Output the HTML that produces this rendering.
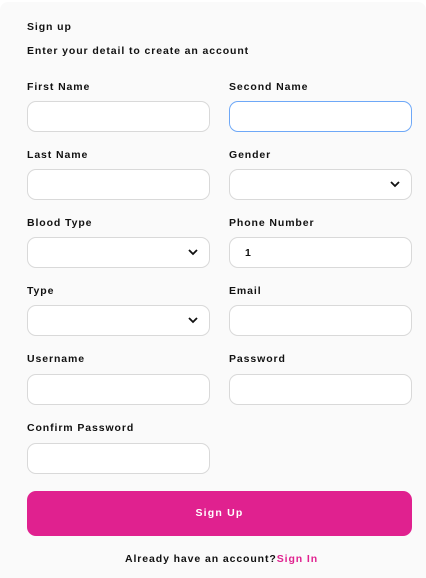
<!DOCTYPE html>
<html><head><style>
*{box-sizing:border-box;margin:0;padding:0}
body{width:426px;height:578px;background:#fff;font-family:"Liberation Sans",sans-serif;font-weight:bold;color:#111;position:relative;overflow:hidden}
.panel{position:absolute;left:0;top:2px;width:426px;height:576px;background:#fafafa;border-radius:8px 8px 0 0}
.t{position:absolute;font-size:10.5px;letter-spacing:0.9px;line-height:12px}
.in{position:absolute;width:183px;height:31px;background:#fff;border:1px solid #d9d9d9;border-radius:9px}
.in.f{border-color:#6ea8f7}
.chev{position:absolute;right:11px;top:10px}
.btn{position:absolute;left:27px;top:491px;width:385px;height:45px;background:#e0218f;border-radius:9px;color:#fff;text-align:center;line-height:45px;font-size:10.5px;letter-spacing:1.2px}
</style></head><body>
<div class="panel"></div>
<div class="t" style="left:27px;top:21px">Sign up</div>
<div class="t" style="left:27px;top:45px">Enter your detail to create an account</div>

<div class="t" style="left:27px;top:81px">First Name</div>
<div class="t" style="left:229px;top:81px">Second Name</div>
<div class="in" style="left:27px;top:101px"></div>
<div class="in f" style="left:229px;top:101px"></div>

<div class="t" style="left:27px;top:149px">Last Name</div>
<div class="t" style="left:229px;top:149px">Gender</div>
<div class="in" style="left:27px;top:169px"></div>
<div class="in" style="left:229px;top:169px"><svg class="chev" width="10" height="8" viewBox="0 0 10 8"><path d="M1 2l4 4 4-4" fill="none" stroke="#111" stroke-width="1.8"/></svg></div>

<div class="t" style="left:27px;top:217px">Blood Type</div>
<div class="t" style="left:229px;top:217px">Phone Number</div>
<div class="in" style="left:27px;top:237px"><svg class="chev" width="10" height="8" viewBox="0 0 10 8"><path d="M1 2l4 4 4-4" fill="none" stroke="#111" stroke-width="1.8"/></svg></div>
<div class="in" style="left:229px;top:237px"><span class="t" style="left:15px;top:9px">1</span></div>

<div class="t" style="left:27px;top:285px">Type</div>
<div class="t" style="left:229px;top:285px">Email</div>
<div class="in" style="left:27px;top:305px"><svg class="chev" width="10" height="8" viewBox="0 0 10 8"><path d="M1 2l4 4 4-4" fill="none" stroke="#111" stroke-width="1.8"/></svg></div>
<div class="in" style="left:229px;top:305px"></div>

<div class="t" style="left:27px;top:353px">Username</div>
<div class="t" style="left:229px;top:353px">Password</div>
<div class="in" style="left:27px;top:374px"></div>
<div class="in" style="left:229px;top:374px"></div>

<div class="t" style="left:27px;top:422px">Confirm Password</div>
<div class="in" style="left:27px;top:443px"></div>

<div class="btn">Sign Up</div>
<div class="t" style="left:0;width:443px;text-align:center;top:553px">Already have an account?<span style="color:#e0218f">Sign In</span></div>
</body></html>
